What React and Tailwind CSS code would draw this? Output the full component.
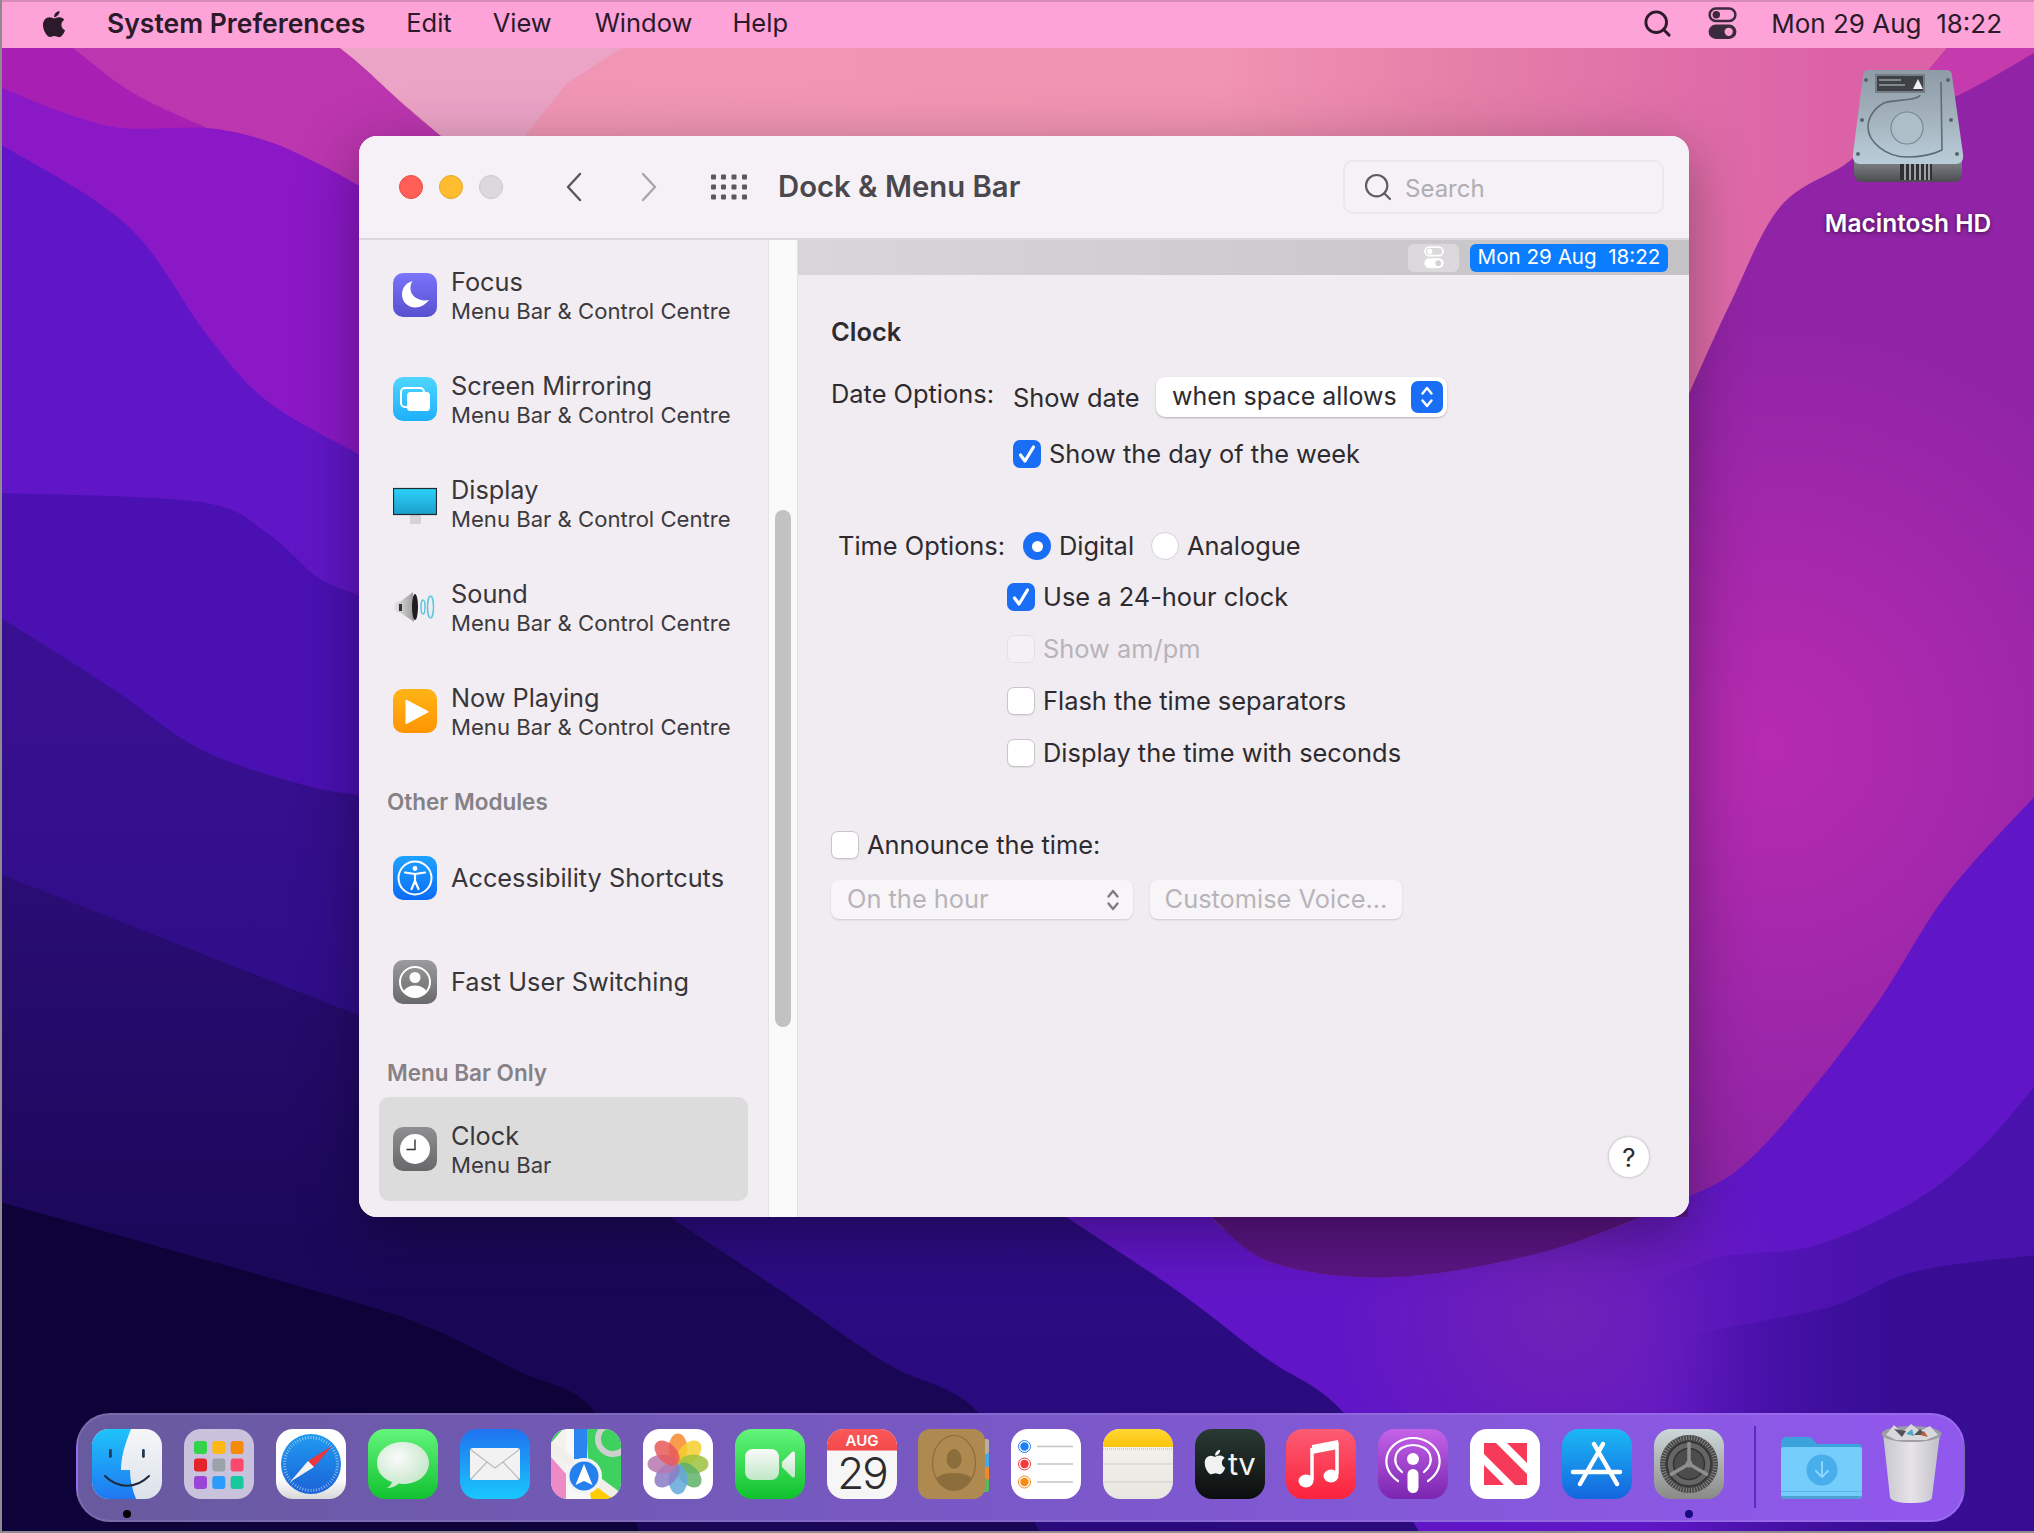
import React from 'react';
import { FaApple } from 'react-icons/fa';
import { Search } from 'lucide-react';

// catmull-rom through the points, so the wallpaper edges stay soft
const curve = (pts) => {
  let d = `L${pts[0][0]} ${pts[0][1]}`;
  for (let i = 0; i < pts.length - 1; i++) {
    const p0 = pts[i - 1] || pts[i];
    const p1 = pts[i];
    const p2 = pts[i + 1];
    const p3 = pts[i + 2] || p2;
    d += `C${p1[0] + (p2[0] - p0[0]) / 6} ${p1[1] + (p2[1] - p0[1]) / 6} ${p2[0] - (p3[0] - p1[0]) / 6} ${p2[1] - (p3[1] - p1[1]) / 6} ${p2[0]} ${p2[1]}`;
  }
  return d;
};

// ---- wallpaper, painted back to front ----
const Wallpaper = () => (
  <svg className="absolute inset-0 w-full h-full" viewBox="0 0 2034 1533" preserveAspectRatio="none">
    <defs>
      <linearGradient id="wpPink" x1="0" y1="0" x2="1" y2="0">
        <stop offset="0.3" stopColor="#f096b4" />
        <stop offset="0.6" stopColor="#f193b2" />
        <stop offset="0.72" stopColor="#e57fa8" />
        <stop offset="0.9" stopColor="#dc62a8" />
      </linearGradient>
      <radialGradient id="wpMag" gradientUnits="userSpaceOnUse" cx="1770" cy="745" r="420">
        <stop offset="0" stopColor="#b62bb0" />
        <stop offset="1" stopColor="#9124a6" />
      </radialGradient>
      <linearGradient id="wpBand3" gradientUnits="userSpaceOnUse" x1="0" y1="620" x2="0" y2="1420">
        <stop offset="0" stopColor="#3a1092" />
        <stop offset="0.5" stopColor="#2f0d88" />
        <stop offset="1" stopColor="#2a0b7e" />
      </linearGradient>
      <linearGradient id="wpBand4" gradientUnits="userSpaceOnUse" x1="0" y1="880" x2="0" y2="1300">
        <stop offset="0" stopColor="#2a0d74" />
        <stop offset="1" stopColor="#190756" />
      </linearGradient>
      <radialGradient id="wpGlow" gradientUnits="userSpaceOnUse" cx="1560" cy="1310" r="220">
        <stop offset="0" stopColor="#6f22b6" />
        <stop offset="1" stopColor="#6f22b6" stopOpacity="0" />
      </radialGradient>
      <linearGradient id="wpR1" gradientUnits="userSpaceOnUse" x1="1640" y1="0" x2="1860" y2="0">
        <stop offset="0" stopColor="#4a12ac" stopOpacity="0" />
        <stop offset="1" stopColor="#4a12ac" />
      </linearGradient>
      <linearGradient id="wpR2" gradientUnits="userSpaceOnUse" x1="1680" y1="0" x2="1900" y2="0">
        <stop offset="0" stopColor="#370d94" stopOpacity="0" />
        <stop offset="1" stopColor="#370d94" />
      </linearGradient>
    </defs>
    <rect width="2034" height="1533" fill="url(#wpPink)" />
    <path d="M340 48L622 48L567 83L525 136L441 136Z" fill="#eba3c6" />
    <path d={`M0 48${curve([[340, 48], [363, 67], [402, 103], [441, 136]])}L441 1533L0 1533Z`} fill="#bb36af" />
    <path d={`M0 48${curve([[73, 48], [133, 93], [207, 128]])}${curve([[207, 128], [123, 128], [65, 113], [0, 87]])}Z`} fill="#a81fb4" />
    <path d={`M2034 48${curve([[1947, 48], [1880, 128], [1847, 163], [1780, 207], [1730, 304], [1688, 396]])}L1400 700L1200 1300L2034 1300Z`} fill="url(#wpMag)" />
    <path d={`M1947 48L2034 48L2034 53${curve([[2034, 53], [1963, 93], [1880, 128]])}Z`} fill="#c53bae" />
    <path d={`M0 87${curve([[0, 87], [65, 113], [123, 128], [207, 128], [267, 141], [317, 163], [358, 185]])}L441 210L441 1533L0 1533Z`} fill="#8a18c6" />
    <path d={`M0 144${curve([[0, 144], [127, 225], [207, 335], [267, 401], [358, 454]])}L1000 1000${curve([[1211, 1217], [1273, 1263], [1396, 1277], [1550, 1250], [1688, 1197], [1747, 1162], [1813, 1088], [1880, 999], [1947, 894], [2034, 797]])}L2034 1533L0 1533Z`} fill="#6016c6" />
    <rect x="1100" y="1090" width="934" height="443" fill="url(#wpGlow)" />
    <path d={`M1211 1217${curve([[1211, 1217], [1273, 1263], [1396, 1277], [1550, 1250], [1688, 1197]])}L1688 1217Z`} fill="#5a1582" />
    <path d={`M2034 1087${curve([[2034, 1087], [1980, 1149], [1913, 1202], [1813, 1246], [1713, 1259], [1620, 1300]])}L1500 1533L2034 1533Z`} fill="url(#wpR1)" />
    <path d={`M2034 1255${curve([[2034, 1255], [1913, 1272], [1830, 1307], [1680, 1340], [1560, 1400]])}L1500 1533L2034 1533Z`} fill="url(#wpR2)" />
    <path d={`M0 493${curve([[0, 493], [200, 502], [267, 533], [317, 577], [358, 595]])}L1000 1000L1066 1217L1343 1412L1343 1533L0 1533Z`} fill="#4a10b2" />
    <path d={`M0 617${curve([[0, 617], [110, 687], [200, 749], [300, 784], [358, 795]])}${curve([[1066, 1217], [1176, 1290], [1264, 1357], [1343, 1412], [1420, 1533]])}L0 1533Z`} fill="url(#wpBand3)" />
    <path d={`M0 874${curve([[0, 874], [358, 1015]])}${curve([[670, 1217], [780, 1290], [886, 1363], [978, 1412], [1040, 1533]])}L0 1533Z`} fill="url(#wpBand4)" />
    <path d={`M0 1202${curve([[0, 1202], [340, 1298], [428, 1327], [516, 1370], [595, 1412], [640, 1533]])}L0 1533Z`} fill="#0d0338" />
  </svg>
);

// ---- small glyphs ----
const ControlGlyph = ({ fg, hole, w, h }) => (
  <svg width={w} height={h} viewBox="0 0 28 32">
    <rect x="1.5" y="1.5" width="25" height="12" rx="6" fill="none" stroke={fg} strokeWidth="2.4" />
    <circle cx="8" cy="7.5" r="3.6" fill={fg} />
    <rect x="0.5" y="17" width="27" height="14" rx="7" fill={fg} />
    <circle cx="20" cy="24" r="4" fill={hole} />
  </svg>
);

const Dots = () => (
  <svg width="36" height="26" viewBox="0 0 36 26" fill="#5a585c">
    {[2.5, 12.5, 23, 33.5].flatMap((x) => [3, 13, 23].map((y) => <rect key={`${x}-${y}`} x={x - 2.5} y={y - 2.5} width="5" height="5" rx="1" />))}
  </svg>
);

const Chevron = ({ d, color }) => (
  <svg width="17" height="30" viewBox="0 0 17 30" fill="none" stroke={color} strokeWidth="2.4" strokeLinecap="round" strokeLinejoin="round">
    <path d={d} />
  </svg>
);

const Check = () => (
  <svg width="28" height="28" viewBox="0 0 28 28" fill="none">
    <path d="M7.5 15L12 21L20.5 7" stroke="#fff" strokeWidth="3.2" strokeLinecap="round" strokeLinejoin="round" />
  </svg>
);

const Updown = ({ color, w = 14, h = 24 }) => (
  <svg width={w} height={h} viewBox="0 0 14 24" fill="none" stroke={color} strokeWidth="2.4" strokeLinecap="round" strokeLinejoin="round">
    <path d="M2.5 8.5L7 3L11.5 8.5" />
    <path d="M2.5 15.5L7 21L11.5 15.5" />
  </svg>
);

// ---- sidebar icons, 44px ----
const FocusIcon = () => (
  <svg width="44" height="44" viewBox="0 0 44 44">
    <defs><linearGradient id="sFocus" x1="0" y1="0" x2="0" y2="1"><stop stopColor="#7b74fc" /><stop offset="1" stopColor="#5850ce" /></linearGradient></defs>
    <rect width="44" height="44" rx="10" fill="url(#sFocus)" />
    <path d="M19.5 8C12.500 10 9 15.500 9 21.500C9 29 15 34.500 22 34.500C28 34.500 32.500 31.500 36 27C27 29 18 24 17.500 16C17.300 13 18 10 19.500 8Z" fill="#fff" />
  </svg>
);
const MirrorIcon = () => (
  <svg width="44" height="44" viewBox="0 0 44 44">
    <defs><linearGradient id="sMirror" x1="0" y1="0" x2="0" y2="1"><stop stopColor="#4fd6fe" /><stop offset="1" stopColor="#1eaffb" /></linearGradient></defs>
    <rect width="44" height="44" rx="10" fill="url(#sMirror)" />
    <rect x="8" y="11" width="23" height="19" rx="4" fill="none" stroke="#fff" strokeWidth="2" />
    <rect x="14" y="15" width="23" height="19" rx="3.500" fill="#fff" />
  </svg>
);
const DisplayIcon = () => (
  <svg width="44" height="44" viewBox="0 0 44 44">
    <defs><linearGradient id="sDisp" x1="0" y1="0" x2="0" y2="1"><stop stopColor="#2bd2fb" /><stop offset="1" stopColor="#1c9fc9" /></linearGradient></defs>
    <rect x="17" y="34" width="11" height="9" rx="1" fill="#d4d3d6" />
    <rect x="0.500" y="7.500" width="43" height="26" fill="url(#sDisp)" stroke="#1f2a30" strokeWidth="1.200" />
  </svg>
);
const SoundIcon = () => (
  <svg width="44" height="44" viewBox="0 0 44 44">
    <defs><linearGradient id="sSpk" x1="0" y1="0" x2="1" y2="0"><stop stopColor="#e8e8e8" /><stop offset="1" stopColor="#9c9c9c" /></linearGradient></defs>
    <path d="M1 18L8 16L20 7L21 37L8 28L1 26Z" fill="url(#sSpk)" />
    <ellipse cx="22" cy="22" rx="3" ry="13" fill="#1d1d1f" />
    <rect x="6" y="19" width="3" height="7" fill="#333" />
    <ellipse cx="30" cy="22" rx="2" ry="7" fill="none" stroke="#56c8dc" strokeWidth="1.500" />
    <ellipse cx="37.500" cy="22" rx="3" ry="11" fill="none" stroke="#56c8dc" strokeWidth="1.500" />
  </svg>
);
const PlayIcon = () => (
  <svg width="44" height="44" viewBox="0 0 44 44">
    <defs><linearGradient id="sPlay" x1="0" y1="0" x2="0" y2="1"><stop stopColor="#ffb415" /><stop offset="1" stopColor="#ff9500" /></linearGradient></defs>
    <rect width="44" height="44" rx="10" fill="url(#sPlay)" />
    <path d="M12.500 11.500L12.500 34.500C12.500 35 13 35.300 13.500 35L35 23.500C35.600 23 35.600 22.500 35 22L13.500 10.800C13 10.600 12.500 11 12.500 11.500Z" fill="#fff" />
  </svg>
);
const AccessIcon = () => (
  <svg width="44" height="44" viewBox="0 0 44 44">
    <defs><linearGradient id="sAcc" x1="0" y1="0" x2="0" y2="1"><stop stopColor="#1fa2ff" /><stop offset="1" stopColor="#0a6cf5" /></linearGradient></defs>
    <rect width="44" height="44" rx="10" fill="url(#sAcc)" />
    <circle cx="22" cy="22" r="16.500" fill="none" stroke="#fff" strokeWidth="2" />
    <circle cx="22" cy="12.500" r="2.400" fill="#fff" />
    <path d="M12 16.500L22 18L32 16.500M22 18L22 25M22 25L18.500 33M22 25L25.500 33" fill="none" stroke="#fff" strokeWidth="2.200" strokeLinecap="round" strokeLinejoin="round" />
  </svg>
);
const UserIcon = () => (
  <svg width="44" height="44" viewBox="0 0 44 44">
    <defs>
      <linearGradient id="sUser" x1="0" y1="0" x2="0" y2="1"><stop stopColor="#9b9b9d" /><stop offset="1" stopColor="#69696b" /></linearGradient>
      <clipPath id="sUserClip"><circle cx="22" cy="22" r="15" /></clipPath>
    </defs>
    <rect width="44" height="44" rx="10" fill="url(#sUser)" />
    <circle cx="22" cy="22" r="15" fill="none" stroke="#fff" strokeWidth="2" />
    <circle cx="22" cy="17.500" r="5.500" fill="#fff" />
    <ellipse cx="22" cy="34" rx="12" ry="8.500" fill="#fff" clipPath="url(#sUserClip)" />
  </svg>
);
const ClockIcon = () => (
  <svg width="44" height="44" viewBox="0 0 44 44">
    <defs><linearGradient id="sClock" x1="0" y1="0" x2="0" y2="1"><stop stopColor="#8f8f91" /><stop offset="1" stopColor="#68686a" /></linearGradient></defs>
    <rect width="44" height="44" rx="10" fill="url(#sClock)" />
    <circle cx="22" cy="22" r="15" fill="#fff" />
    <path d="M22 12.500L22 22.500L13.500 22.500" fill="none" stroke="#333" strokeWidth="1.400" />
  </svg>
);

// ---- dock icons, 70px ----
const Finder = () => (
  <svg width="70" height="70" viewBox="0 0 70 70">
    <defs>
      <linearGradient id="dFinderL" x1="0" y1="0" x2="0" y2="1"><stop stopColor="#1fc3fa" /><stop offset="1" stopColor="#1f78f2" /></linearGradient>
      <linearGradient id="dFinderR" x1="0" y1="0" x2="0" y2="1"><stop stopColor="#f5f6f8" /><stop offset="1" stopColor="#dbe2ea" /></linearGradient>
      <clipPath id="dFinderC"><rect width="70" height="70" rx="17" /></clipPath>
    </defs>
    <g clipPath="url(#dFinderC)">
      <rect width="70" height="70" fill="url(#dFinderR)" />
      <path d="M0 0L39 0C33 15 29 28 29 41L38 41C38 50 40 60 44 70L0 70Z" fill="url(#dFinderL)" />
    </g>
    <rect x="17" y="20" width="2.800" height="9" rx="1.400" fill="#223a55" />
    <rect x="50" y="20" width="2.800" height="9" rx="1.400" fill="#223a55" />
    <path d="M13 47C26 60 44 60 57 47" fill="none" stroke="#1c2b3d" strokeWidth="2" strokeLinecap="round" />
  </svg>
);
const Launchpad = () => {
  const c = ['#33d44b', '#fdb813', '#f58a0b', '#e3242b', '#9ca3a8', '#fb4a6e', '#9a45d8', '#2a9cfb', '#18c9a0'];
  return (
    <svg width="70" height="70" viewBox="0 0 70 70">
      <rect width="70" height="70" rx="17" fill="#c8c2dc" />
      {c.map((f, i) => <rect key={f} x={9 + (i % 3) * 18.300 + 1} y={12 + Math.floor(i / 3) * 17.500} width="13" height="13" rx="3" fill={f} />)}
    </svg>
  );
};
const Safari = () => {
  const ticks = Array.from({ length: 60 }, (_, i) => i * 6);
  return (
    <svg width="70" height="70" viewBox="0 0 70 70">
      <defs>
        <linearGradient id="dSafBg" x1="0" y1="0" x2="0" y2="1"><stop offset="0.7" stopColor="#fff" /><stop offset="1" stopColor="#d8d8d8" /></linearGradient>
        <linearGradient id="dSafC" x1="0" y1="0" x2="0" y2="1"><stop stopColor="#1f9bf0" /><stop offset="1" stopColor="#1c62d8" /></linearGradient>
      </defs>
      <rect width="70" height="70" rx="17" fill="url(#dSafBg)" />
      <circle cx="35" cy="35" r="30" fill="url(#dSafC)" />
      {ticks.map((t) => <line key={t} x1="35" y1="7" x2="35" y2="10" stroke="#cfe4fa" strokeWidth="0.600" transform={`rotate(${t} 35 35)`} />)}
      <path d="M56 17L32 32L38 38Z" fill="#f0343c" />
      <path d="M14 53L38 38L32 32Z" fill="#f2f2f2" />
    </svg>
  );
};
const Messages = () => (
  <svg width="70" height="70" viewBox="0 0 70 70">
    <defs>
      <linearGradient id="dMsg" x1="0" y1="0" x2="0" y2="1"><stop stopColor="#63f57d" /><stop offset="1" stopColor="#11c22f" /></linearGradient>
      <radialGradient id="dMsgB" cx="0.4" cy="0.35" r="0.8"><stop stopColor="#fbfbfb" /><stop offset="1" stopColor="#b9e2be" /></radialGradient>
    </defs>
    <rect width="70" height="70" rx="17" fill="url(#dMsg)" />
    <path d="M35 13C19 13 9 23 9 34C9 43 15 50 24 53C23 56 21 58 19 59C24 59 28 57 31 54.500C33 55 34 55 35 55C51 55 61 45 61 34C61 23 51 13 35 13Z" fill="url(#dMsgB)" />
  </svg>
);
const Mail = () => (
  <svg width="70" height="70" viewBox="0 0 70 70">
    <defs><linearGradient id="dMail" x1="0" y1="0" x2="0" y2="1"><stop stopColor="#1f72f0" /><stop offset="1" stopColor="#1ac7fd" /></linearGradient></defs>
    <rect width="70" height="70" rx="17" fill="url(#dMail)" />
    <rect x="10" y="19" width="50" height="32" rx="3" fill="#f2f2f2" />
    <path d="M10.500 20.500L35 39L59.500 20.500M11 50L27 33M59 50L43 33" fill="none" stroke="#b9b9b9" strokeWidth="1.100" />
  </svg>
);
const Maps = () => (
  <svg width="70" height="70" viewBox="0 0 70 70">
    <defs><clipPath id="dMapC"><rect width="70" height="70" rx="17" /></clipPath></defs>
    <g clipPath="url(#dMapC)">
      <rect width="70" height="70" fill="#f4f2ee" />
      <path d="M35 0L70 0L70 70L40 70Z" fill="#3ed15f" />
      <path d="M0 0L12 0L0 14Z" fill="#3ed15f" />
      <path d="M0 28L16 46L16 70L0 70Z" fill="#ee8bc6" />
      <path d="M38 50L70 70L38 70Z" fill="#ffcc00" />
      <path d="M15 0L29 0L40 70L15 70Z" fill="#f8f8f8" />
      <path d="M0 12L70 64L70 76L0 24Z" fill="#f0efea" />
      <rect x="23" y="0" width="13" height="30" fill="#2b84f0" />
      <circle cx="62" cy="10" r="15" fill="none" stroke="#cfd0ce" strokeWidth="6" />
      <circle cx="33" cy="47" r="18" fill="#f2f3f5" />
      <circle cx="33" cy="47" r="14.500" fill="#2480ec" />
      <path d="M33 35L41.500 56L33 52L24.500 56Z" fill="#fff" />
    </g>
  </svg>
);
const Photos = () => {
  const petals = ['#f78b2d', '#f5cf2e', '#9fc23f', '#5fb269', '#63a8dd', '#8a7bc6', '#b778ae', '#e8595a'];
  return (
    <svg width="70" height="70" viewBox="0 0 70 70">
      <rect width="70" height="70" rx="17" fill="#fff" />
      {petals.map((p, i) => <ellipse key={p} cx="35" cy="19.500" rx="9.500" ry="15" fill={p} opacity="0.85" transform={`rotate(${i * 45} 35 35)`} />)}
    </svg>
  );
};
const FaceTime = () => (
  <svg width="70" height="70" viewBox="0 0 70 70">
    <defs>
      <linearGradient id="dFt" x1="0" y1="0" x2="0" y2="1"><stop stopColor="#63f57d" /><stop offset="1" stopColor="#0fc12c" /></linearGradient>
      <linearGradient id="dFtW" x1="0" y1="0" x2="0" y2="1"><stop stopColor="#fafafa" /><stop offset="1" stopColor="#bfe8c6" /></linearGradient>
    </defs>
    <rect width="70" height="70" rx="17" fill="url(#dFt)" />
    <rect x="10" y="20" width="34" height="31" rx="8" fill="url(#dFtW)" />
    <path d="M47 33L57 23C58 22 60 23 60 24L60 47C60 48 58 49 57 48L47 38Z" fill="url(#dFtW)" />
  </svg>
);
const Calendar = () => (
  <svg width="70" height="70" viewBox="0 0 70 70">
    <defs>
      <clipPath id="dCalC"><rect width="70" height="70" rx="17" /></clipPath>
      <linearGradient id="dCalT" x1="0" y1="0" x2="0" y2="1"><stop stopColor="#f85a5a" /><stop offset="1" stopColor="#f4484a" /></linearGradient>
    </defs>
    <g clipPath="url(#dCalC)">
      <rect width="70" height="70" fill="#f7f6f6" />
      <rect width="70" height="21.500" fill="url(#dCalT)" />
    </g>
    <text x="35" y="17" textAnchor="middle" fill="#fff" fontFamily="Inter, sans-serif" fontWeight="600" fontSize="15">AUG</text>
    <text x="35" y="60" textAnchor="middle" fill="#2c2c2e" fontFamily="Inter, sans-serif" fontWeight="300" fontSize="44" letterSpacing="-2">29</text>
  </svg>
);
const Contacts = () => (
  <svg width="72" height="70" viewBox="0 0 72 70" className="shrink-0">
    <rect x="62" y="10" width="9" height="15" rx="2" fill="#b6b1a6" />
    <rect x="62" y="25" width="9" height="14" fill="#3fa9ee" />
    <rect x="62" y="38" width="9" height="14" fill="#ef8a22" />
    <rect x="62" y="50" width="9" height="13" rx="2" fill="#56b85a" />
    <rect width="67" height="70" rx="12" fill="#ae8a50" />
    <ellipse cx="36" cy="34" rx="21.500" ry="27.500" fill="none" stroke="#8c6d3c" strokeWidth="1.200" />
    <ellipse cx="36" cy="30" rx="7.500" ry="10" fill="#8c6d3c" />
    <path d="M18 50C22 42 50 42 54 50C50 56 44 61 36 61C28 61 22 56 18 50Z" fill="#8c6d3c" />
  </svg>
);
const Reminders = () => (
  <svg width="70" height="70" viewBox="0 0 70 70">
    <rect width="70" height="70" rx="17" fill="#fff" />
    {[['#1f7ff4', 17.500], ['#f23a3c', 35], ['#f28c13', 53]].map(([f, y]) => (
      <g key={f}>
        <circle cx="13.500" cy={y} r="6" fill="#fff" stroke={f} strokeWidth="1" />
        <circle cx="13.500" cy={y} r="4.200" fill={f} />
        <line x1="26" y1={y} x2="62" y2={y} stroke="#c4c4c4" strokeWidth="1.300" />
      </g>
    ))}
  </svg>
);
const Notes = () => (
  <svg width="70" height="70" viewBox="0 0 70 70">
    <defs>
      <clipPath id="dNotC"><rect width="70" height="70" rx="17" /></clipPath>
      <linearGradient id="dNotB" x1="0" y1="0" x2="0" y2="1"><stop stopColor="#f6f4f0" /><stop offset="1" stopColor="#e8e6e1" /></linearGradient>
      <linearGradient id="dNotT" x1="0" y1="0" x2="0" y2="1"><stop stopColor="#ffd733" /><stop offset="1" stopColor="#fcc30b" /></linearGradient>
    </defs>
    <g clipPath="url(#dNotC)">
      <rect width="70" height="70" fill="url(#dNotB)" />
      <rect width="70" height="18" fill="url(#dNotT)" />
      <line x1="0" y1="20" x2="70" y2="20" stroke="#c9c7c3" strokeWidth="1.500" strokeDasharray="1 1" />
      <line x1="0" y1="35" x2="70" y2="35" stroke="#d9d7d2" strokeWidth="1.300" />
      <line x1="0" y1="53" x2="70" y2="53" stroke="#d9d7d2" strokeWidth="1.300" />
    </g>
  </svg>
);
const TV = () => (
  <svg width="70" height="70" viewBox="0 0 70 70">
    <defs><linearGradient id="dTv" x1="0" y1="0" x2="0" y2="1"><stop stopColor="#293a33" /><stop offset="1" stopColor="#0c0d0e" /></linearGradient></defs>
    <rect width="70" height="70" rx="17" fill="url(#dTv)" />
    <FaApple x="6" y="19" size={28} color="#f2f2f2" />
    <text x="33" y="46" fill="#f2f2f2" fontFamily="Inter, sans-serif" fontWeight="400" fontSize="31" letterSpacing="-0.500">tv</text>
  </svg>
);
const Music = () => (
  <svg width="70" height="70" viewBox="0 0 70 70">
    <defs><linearGradient id="dMus" x1="0" y1="0" x2="0" y2="1"><stop stopColor="#fb5c74" /><stop offset="1" stopColor="#fa233b" /></linearGradient></defs>
    <rect width="70" height="70" rx="17" fill="url(#dMus)" />
    <path d="M26 19L51 14L51 45" fill="none" stroke="#fff" strokeWidth="3.500" strokeLinejoin="round" />
    <path d="M26 19L26 51" stroke="#fff" strokeWidth="3.500" />
    <path d="M26 16L52 11L52 20L26 25Z" fill="#fff" />
    <ellipse cx="20" cy="52" rx="7.500" ry="6.500" fill="#fff" />
    <ellipse cx="45" cy="47" rx="7.500" ry="6.500" fill="#fff" />
  </svg>
);
const Podcasts = () => (
  <svg width="70" height="70" viewBox="0 0 70 70">
    <defs><linearGradient id="dPod" x1="0" y1="0" x2="0" y2="1"><stop stopColor="#c563e8" /><stop offset="1" stopColor="#7a25b0" /></linearGradient></defs>
    <rect width="70" height="70" rx="17" fill="url(#dPod)" />
    <path d="M20 52C10 45 7 36 9 27C12 16 23 9 35 9C47 9 58 16 61 27C63 36 60 45 50 52" fill="none" stroke="#fff" strokeWidth="2.200" strokeLinecap="round" />
    <path d="M24 43C18 38 16 32 18 26C20 20 27 16 35 16C43 16 50 20 52 26C54 32 52 38 46 43" fill="none" stroke="#fff" strokeWidth="2.200" strokeLinecap="round" />
    <circle cx="35" cy="30" r="6" fill="#fff" />
    <rect x="29.500" y="40" width="11" height="24" rx="5.500" fill="#fff" />
  </svg>
);
const News = () => (
  <svg width="70" height="70" viewBox="0 0 70 70">
    <rect width="70" height="70" rx="17" fill="#fff" />
    <path d="M14 14L26 14L57 45L57 56L45 56L14 25Z" fill="#f73a58" />
    <path d="M37 14L57 14L57 34Z" fill="#f73a58" />
    <path d="M14 36L34 56L14 56Z" fill="#f73a58" />
  </svg>
);
const AppStore = () => (
  <svg width="70" height="70" viewBox="0 0 70 70">
    <defs><linearGradient id="dApp" x1="0" y1="0" x2="0" y2="1"><stop stopColor="#1cb8f5" /><stop offset="1" stopColor="#1465de" /></linearGradient></defs>
    <rect width="70" height="70" rx="17" fill="url(#dApp)" />
    <path d="M41 15L18 55M32 15L55 55M11 43L58 43" stroke="#fff" strokeWidth="4.500" strokeLinecap="round" fill="none" />
  </svg>
);
const SysPrefs = () => {
  const teeth = Array.from({ length: 60 }, (_, i) => i * 6);
  return (
    <svg width="70" height="70" viewBox="0 0 70 70">
      <defs><linearGradient id="dSys" x1="0" y1="0" x2="0" y2="1"><stop stopColor="#cdd8da" /><stop offset="1" stopColor="#8a8a86" /></linearGradient></defs>
      <rect width="70" height="70" rx="17" fill="url(#dSys)" />
      <circle cx="35" cy="35" r="29" fill="#454545" />
      {teeth.map((t) => <line key={t} x1="35" y1="6" x2="35" y2="11" stroke="#8a8a8a" strokeWidth="1" transform={`rotate(${t} 35 35)`} />)}
      <circle cx="35" cy="35" r="22" fill="#666" stroke="#333" strokeWidth="1.500" />
      <circle cx="35" cy="35" r="15.500" fill="#4c4c4c" stroke="#333" strokeWidth="1.500" />
      <path d="M35 35L35 13M35 35L16 46M35 35L54 46" stroke="#8f8f8f" strokeWidth="3.500" />
      <circle cx="35" cy="35" r="3.500" fill="#8f8f8f" />
    </svg>
  );
};
const Folder = () => (
  <svg width="81" height="68" viewBox="0 0 81 68">
    <path d="M0 12C0 9 2 6 5 6L27 6C30 6 32 8 34 11L36 13L78 13C80 13 81 15 81 17L81 30L0 30Z" fill="#3ba2dc" />
    <path d="M0 19C0 17 1 16 3 16L78 16C80 16 81 17 81 19L81 64C81 66 80 68 78 68L3 68C1 68 0 66 0 64Z" fill="#74cdfb" />
    <rect y="60" width="81" height="1" fill="#5cb8ea" />
    <path d="M0 64C0 66 1 68 3 68L78 68C80 68 81 66 81 64L81 65L0 65Z" fill="#4f9fd3" />
    <ellipse cx="41" cy="39" rx="15.500" ry="15.500" fill="#48aeec" />
    <path d="M41 31L41 46M35 40L41 46L47 40" fill="none" stroke="#8ad6fd" strokeWidth="2" strokeLinecap="round" strokeLinejoin="round" />
  </svg>
);
const Trash = () => (
  <svg width="63" height="80" viewBox="0 0 63 80">
    <defs>
      <linearGradient id="dTrash" x1="0" y1="0" x2="1" y2="0"><stop stopColor="#c8c6ce" /><stop offset="0.5" stopColor="#e6e4e8" /><stop offset="1" stopColor="#c2c0c8" /></linearGradient>
    </defs>
    <path d="M3 10L60 10L52 74C52 78 44 80 31 80C19 80 11 78 10 74Z" fill="url(#dTrash)" />
    <ellipse cx="31.500" cy="11" rx="30" ry="8" fill="#9e9ca4" />
    <path d="M6 12L14 2L22 10L31 1L40 8L50 3L58 12L46 17L16 17Z" fill="#d9d8dc" />
    <path d="M14 6L22 14L26 8ZM34 12L40 6L46 12Z" fill="#54525a" />
    <path d="M26 11L32 6L34 13Z" fill="#4fa8c8" />
    <path d="M40 12L44 8L48 14Z" fill="#b5603c" />
  </svg>
);

const HardDisk = () => (
  <svg width="112" height="113" viewBox="0 0 112 113">
    <defs>
      <linearGradient id="hdBody" x1="0" y1="0" x2="0" y2="1"><stop stopColor="#8e9ba6" /><stop offset="0.5" stopColor="#a3b2bd" /><stop offset="1" stopColor="#b9ced9" /></linearGradient>
      <linearGradient id="hdBase" x1="0" y1="0" x2="0" y2="1"><stop stopColor="#888c90" /><stop offset="1" stopColor="#4a4c50" /></linearGradient>
    </defs>
    <path d="M2 88L2 103C2 109 5 112 10 112L101 112C107 112 110 109 110 103L110 88Z" fill="url(#hdBase)" />
    <rect x="48" y="92" width="32" height="18" fill="#2e3034" />
    {[52, 57, 62, 67, 72, 76].map((x) => <rect key={x} x={x} y="92" width="2" height="18" fill="#9da0a4" />)}
    <path d="M11 6C11 2 13 0 17 0L94 0C98 0 100 2 100 6L111 84C112 90 109 94 104 94L8 94C3 94 0 90 1 84Z" fill="url(#hdBody)" />
    <rect x="24" y="5" width="48" height="17" fill="#3e4247" stroke="#767d84" strokeWidth="2" />
    <rect x="27" y="9" width="22" height="2" fill="#83888e" />
    <rect x="27" y="14" width="26" height="2" fill="#83888e" />
    <path d="M61 19L66 9L71 19Z" fill="#eceff1" />
    <path d="M68 25C66 31 44 29 32 33C22 38 16 48 16 57C16 72 34 87 55 87C70 87 82 84 90 80L89 12" fill="none" stroke="#5f6c76" strokeWidth="1.600" />
    <circle cx="55" cy="58" r="16" fill="#aebec9" stroke="#7b8892" strokeWidth="1.200" />
    {[[14, 10], [96, 10], [10, 50], [99, 50], [6, 84], [105, 84]].map(([x, y]) => <circle key={`${x}${y}`} cx={x} cy={y} r="2" fill="#59626a" />)}
  </svg>
);

// ---- sidebar ----
const SECTION_ONE = [
  { title: 'Focus', sub: 'Menu Bar & Control Centre', Icon: FocusIcon },
  { title: 'Screen Mirroring', sub: 'Menu Bar & Control Centre', Icon: MirrorIcon },
  { title: 'Display', sub: 'Menu Bar & Control Centre', Icon: DisplayIcon },
  { title: 'Sound', sub: 'Menu Bar & Control Centre', Icon: SoundIcon },
  { title: 'Now Playing', sub: 'Menu Bar & Control Centre', Icon: PlayIcon },
];

const SidebarRow = ({ title, sub, Icon, active }) => (
  <div className={`mx-[20px] h-[104px] pl-[14px] flex items-center gap-[14px] rounded-[10px] ${active ? 'bg-[#dcdcdc]' : ''}`}>
    <Icon />
    <div className={`flex flex-col ${sub ? 'pt-[2px]' : 'pb-[1px]'}`}>
      <span className="text-[25.3px] leading-[29px] text-[#38363a]">{title}</span>
      {sub && <span className="mt-[1px] text-[22.1px] leading-[29px] text-[#3c3a3e]">{sub}</span>}
    </div>
  </div>
);

const SectionLabel = ({ children }) => (
  <div className="h-[63px] pl-[28px] pt-[26px] text-[22.5px] leading-[26px] font-semibold text-[#858186]">{children}</div>
);

const Sidebar = () => (
  <div className="w-[409px] pt-[3px] bg-[#f2edf2]">
    {SECTION_ONE.map((r) => <SidebarRow key={r.title} {...r} />)}
    <SectionLabel>Other Modules</SectionLabel>
    <SidebarRow title="Accessibility Shortcuts" Icon={AccessIcon} />
    <SidebarRow title="Fast User Switching" Icon={UserIcon} />
    <SectionLabel>Menu Bar Only</SectionLabel>
    <SidebarRow title="Clock" sub="Menu Bar" Icon={ClockIcon} active />
  </div>
);

// ---- form controls ----
const Checkbox = ({ label, checked, disabled }) => (
  <div className="h-[28px] flex items-center gap-[8px]">
    <div className={`w-[28px] h-[28px] rounded-[7px] shrink-0 ${checked ? 'bg-[#1a6ef6]' : disabled ? 'bg-[#f4f1f5] border border-[#e3e0e4]' : 'bg-white border border-[#c9c6ca] shadow-[0_1px_1px_rgba(0,0,0,0.08)]'}`}>
      {checked && <Check />}
    </div>
    <span className={`text-[25.4px] leading-[28px] ${disabled ? 'text-[#b7b4b9]' : 'text-[#2d2b2f]'}`}>{label}</span>
  </div>
);

const Radio = ({ label, on }) => (
  <div className="flex items-center gap-[8px]">
    <div className={`w-[28px] h-[28px] rounded-full flex items-center justify-center ${on ? 'bg-[#1a6ef6]' : 'bg-white border border-[#d5d2d6]'}`}>
      {on && <div className="w-[11px] h-[11px] rounded-full bg-white" />}
    </div>
    <span className="text-[25.4px] leading-[28px] text-[#2d2b2f]">{label}</span>
  </div>
);

const Pane = () => (
  <div className="flex-1 flex flex-col bg-[#f1ecf1]">
    <div className="h-[35px] shrink-0 pr-[21px] flex items-center justify-end gap-[11px] bg-gradient-to-r from-[#d9d6da] to-[#c4c2c5]">
      <div className="w-[51px] h-[28px] rounded-[6px] bg-[#dbd9dc] flex items-center justify-center">
        <ControlGlyph fg="#fff" hole="#d5d3d6" w={20} h={23} />
      </div>
      <div className="w-[198px] h-[28px] pb-[2px] rounded-[6px] bg-[#0a7cff] flex items-center justify-center text-white text-[20.6px] leading-[26px] whitespace-pre">Mon 29 Aug  18:22</div>
    </div>
    <div className="flex-1 flex flex-col pl-[33px]">
      <div className="mt-[43px] h-[28px] text-[25.5px] leading-[28px] font-semibold text-[#2d2b2f]">Clock</div>
      <div className="mt-[31px] h-[40px] flex items-center">
        <span className="w-[182px] text-[25.4px] leading-[28px] text-[#2d2b2f] -mt-[6px]">Date Options:</span>
        <span className="w-[143px] text-[25.4px] leading-[28px] text-[#2d2b2f] pt-[2px]">Show date</span>
        <div className="w-[291px] h-[40px] rounded-[9px] bg-white shadow-[0_1px_2px_rgba(0,0,0,0.25)] pl-[16px] pr-[4px] flex items-center justify-between">
          <span className="text-[25px] text-[#2d2b2f]">when space allows</span>
          <div className="w-[32px] h-[32px] rounded-[7px] bg-[#1a6ef6] flex items-center justify-center"><Updown color="#fff" /></div>
        </div>
      </div>
      <div className="mt-[23px] pl-[182px]"><Checkbox label="Show the day of the week" checked /></div>
      <div className="mt-[64px] h-[28px] pl-[7px] flex items-center">
        <span className="w-[185px] text-[25.4px] leading-[28px] text-[#2d2b2f]">Time Options:</span>
        <div className="flex gap-[17px]">
          <Radio label="Digital" on />
          <Radio label="Analogue" />
        </div>
      </div>
      <div className="mt-[23px] pl-[176px] flex flex-col gap-[24px]">
        <Checkbox label="Use a 24-hour clock" checked />
        <Checkbox label="Show am/pm" disabled />
        <Checkbox label="Flash the time separators" />
        <Checkbox label="Display the time with seconds" />
      </div>
      <div className="mt-[64px]"><Checkbox label="Announce the time:" /></div>
      <div className="mt-[21px] flex gap-[17px]">
        <div className="w-[302px] h-[39px] rounded-[8px] bg-[#f7f5f8] shadow-[0_1px_2px_rgba(0,0,0,0.15)] pl-[16px] pr-[13px] flex items-center justify-between">
          <span className="text-[25.4px] text-[#b7b4b9]">On the hour</span>
          <Updown color="#807d82" />
        </div>
        <div className="w-[252px] h-[39px] rounded-[8px] bg-[#f7f5f8] shadow-[0_1px_2px_rgba(0,0,0,0.15)] flex items-center justify-center text-[25.4px] text-[#b7b4b9]">Customise Voice...</div>
      </div>
      <div className="mt-auto mb-[40px] mr-[40px] self-end w-[40px] h-[40px] rounded-full bg-white shadow-[0_0_3px_rgba(0,0,0,0.3)] flex items-center justify-center text-[26px] text-[#2d2b2f]">?</div>
    </div>
  </div>
);

const TitleBar = () => (
  <div className="h-[104px] shrink-0 flex items-center pl-[40px] pr-[25px] bg-[#f5f1f7] border-b-2 border-[#dcd8dc]">
    <div className="flex gap-[16px]">
      <div className="w-[24px] h-[24px] rounded-full bg-[#ff5f57] border border-[#e84d46]" />
      <div className="w-[24px] h-[24px] rounded-full bg-[#febc2e] border border-[#e5a724]" />
      <div className="w-[24px] h-[24px] rounded-full bg-[#dcd8dd] border border-[#cbc7cc]" />
    </div>
    <div className="ml-[62px]"><Chevron d="M15 2L3 15L15 28" color="#59565a" /></div>
    <div className="ml-[59px]"><Chevron d="M2 2L14 15L2 28" color="#a9a6aa" /></div>
    <div className="ml-[53px]"><Dots /></div>
    <span className="ml-[31px] text-[29.3px] font-semibold text-[#4a484c]">Dock &amp; Menu Bar</span>
    <div className="ml-auto w-[321px] h-[54px] rounded-[10px] border-2 border-[#ebe7ec] pl-[17px] flex items-center gap-[11px] bg-[#f5f1f7]">
      <Search size={32} strokeWidth={1.6} className="text-[#5f5c61]" />
      <span className="text-[24px] text-[#b0adb1] pt-[3px]">Search</span>
    </div>
  </div>
);

const DOCK_APPS = [
  { id: 'finder', Icon: Finder, running: true },
  { id: 'launchpad', Icon: Launchpad },
  { id: 'safari', Icon: Safari },
  { id: 'messages', Icon: Messages },
  { id: 'mail', Icon: Mail },
  { id: 'maps', Icon: Maps },
  { id: 'photos', Icon: Photos },
  { id: 'facetime', Icon: FaceTime },
  { id: 'calendar', Icon: Calendar },
  { id: 'contacts', Icon: Contacts },
  { id: 'reminders', Icon: Reminders },
  { id: 'notes', Icon: Notes },
  { id: 'tv', Icon: TV },
  { id: 'music', Icon: Music },
  { id: 'podcasts', Icon: Podcasts },
  { id: 'news', Icon: News },
  { id: 'appstore', Icon: AppStore },
  { id: 'sysprefs', Icon: SysPrefs, running: true, dotDark: true },
];

const Dock = () => (
  <div className="relative ml-[76px] w-[1889px] h-[109px] mb-[11px] shrink-0 rounded-[34px] border-2 border-white/10 bg-gradient-to-r from-[#685a9e] via-[#7a58c8] via-50% to-[#9158ee] pl-[14px] pt-[14px] flex items-start gap-[21.88px]">
    {DOCK_APPS.map(({ id, Icon, running, dotDark }) => (
      <div key={id} className="w-[70px] flex flex-col items-center">
        <Icon />
        {running && <div className={`mt-[11px] w-[8px] h-[8px] rounded-full ${dotDark ? 'bg-[#1a0a80]' : 'bg-black'}`} />}
      </div>
    ))}
    <div className="w-[2px] h-[82px] -mt-[3px] ml-[8px] mr-[3px] bg-[#5a2bc0]" />
    <div className="mt-[2px] flex">
      <Folder />
      <div className="ml-[18px] -mt-[8px]"><Trash /></div>
    </div>
  </div>
);

export default function App() {
  return (
    <div className="relative w-[2034px] h-[1533px] overflow-hidden flex flex-col bg-[#3a0f96] font-[Inter,'Liberation_Sans',sans-serif]">
      <Wallpaper />
      <div className="relative h-[48px] shrink-0 pb-[3px] flex items-center bg-[#fea3d8] border-t-2 border-[#d98bb8] text-[#2a1a2a] text-[25.5px]">
        <FaApple className="ml-[39px]" size={30} />
        <span className="ml-[38px] font-semibold text-[26.5px]">System Preferences</span>
        <span className="ml-[41px]">Edit</span>
        <span className="ml-[41px]">View</span>
        <span className="ml-[43px]">Window</span>
        <span className="ml-[40px]">Help</span>
        <div className="ml-auto mr-[32px] flex items-center">
          <Search size={31} strokeWidth={2.2} />
          <div className="ml-[35px]"><ControlGlyph fg="#3b2a3b" hole="#fea3d8" w={29} h={33} /></div>
          <span className="ml-[34px] whitespace-pre text-[26px]">Mon 29 Aug  18:22</span>
        </div>
      </div>
      <div className="relative flex-1" />
      <Dock />
      {/* desktop icon and window sit on a free canvas */}
      <div className="absolute left-[1820px] top-[70px] w-[176px] flex flex-col items-center">
        <HardDisk />
        <span className="mt-[26px] text-[24.5px] leading-[28px] font-semibold text-white [text-shadow:0_1px_4px_rgba(0,0,0,0.6)]">Macintosh HD</span>
      </div>
      <div className="absolute left-[359px] top-[136px] w-[1330px] h-[1081px] rounded-[18px] overflow-hidden flex flex-col shadow-[0_16px_60px_rgba(0,0,0,0.35)] bg-[#f1ecf1]">
        <TitleBar />
        <div className="flex-1 flex min-h-0">
          <Sidebar />
          <div className="w-[30px] relative bg-[#fbfafb] border-l border-r border-[#e4e1e4]">
            <div className="absolute left-[6px] top-[270px] w-[16px] h-[517px] rounded-full bg-[#c3c2c3]" />
          </div>
          <Pane />
        </div>
      </div>
      <div className="absolute inset-0 pointer-events-none border-l-2 border-b-2 border-[#8f8a92]" />
    </div>
  );
}
